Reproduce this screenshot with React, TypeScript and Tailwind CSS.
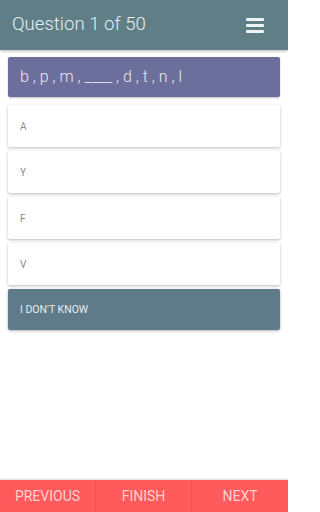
export default function App() {
  const options = ['A', 'Y', 'F', 'V']
  return (
    <div
      className="relative w-[288px] h-[512px] bg-white overflow-hidden flex flex-col"
      style={{ fontFamily: 'Roboto, "Liberation Sans", sans-serif' }}
    >
      {/* Top bar */}
      <div className="h-[50px] bg-[#5f7e85] flex items-center justify-between pl-3 pr-6 shadow-[0_1px_3px_rgba(0,0,0,0.3)]">
        <span className="text-[18.6px] font-light text-[#e6f0f2]">Question 1 of 50</span>
        <div className="flex flex-col gap-[3px] w-[18px]">
          <span className="h-[3px] bg-[#eef4f5] rounded-[1px]" />
          <span className="h-[3px] bg-[#eef4f5] rounded-[1px]" />
          <span className="h-[3px] bg-[#eef4f5] rounded-[1px]" />
        </div>
      </div>

      <div className="flex flex-col px-2 pt-[7px]">
        {/* Question */}
        <div className="h-[40px] bg-[#6c6e9c] rounded-[2px] flex items-center px-3 shadow-[0_1px_2px_rgba(0,0,0,0.25)]">
          <span className="text-[16px] font-light text-[#e8e8f2]">
            b , p , m , ____ , d , t , n , l
          </span>
        </div>

        <div className="flex flex-col gap-[4px] mt-[8px]">
          {options.map((o) => (
            <div
              key={o}
              className="h-[42px] bg-white rounded-[2px] flex items-center px-3 shadow-[0_1px_3px_rgba(0,0,0,0.28)]"
            >
              <span className="text-[10px] text-[#8a8a8a]">{o}</span>
            </div>
          ))}
          <div className="h-[41px] bg-[#5f7b89] rounded-[2px] flex items-center px-3 shadow-[0_1px_3px_rgba(0,0,0,0.3)]">
            <span className="text-[10.5px] text-[#e4ecef]">I DON'T KNOW</span>
          </div>
        </div>
      </div>

      <div className="flex-1" />

      {/* Bottom nav */}
      <div className="h-[32px] bg-[#ff5a5c] grid grid-cols-3 shadow-[0_-1px_2px_rgba(0,0,0,0.15)]">
        <div className="flex items-center justify-center border-r border-[#f05254] text-[14px] text-[#ffd0d0]">
          PREVIOUS
        </div>
        <div className="flex items-center justify-center border-r border-[#f05254] text-[14px] text-[#ffd0d0]">
          FINISH
        </div>
        <div className="flex items-center justify-center text-[14px] text-[#ffd0d0]">NEXT</div>
      </div>
    </div>
  )
}
